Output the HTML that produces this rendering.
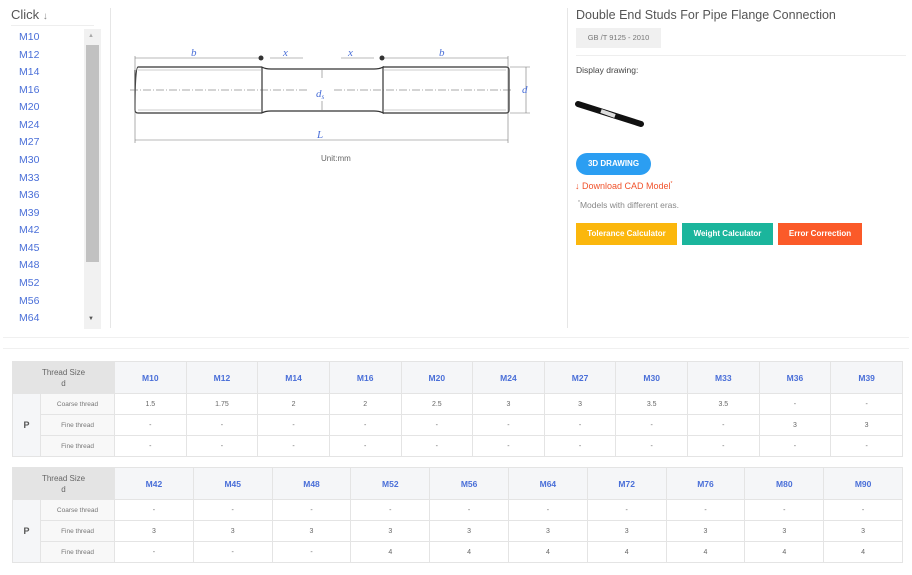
<!DOCTYPE html>
<html><head><meta charset="utf-8"><style>
*{box-sizing:border-box;margin:0;padding:0}
body{width:912px;height:575px;background:#fff;font-family:"Liberation Sans",sans-serif;position:relative;overflow:hidden;color:#333}
.abs{position:absolute}
.li{position:absolute;left:19px;font-size:10.5px;color:#4a6fd8}
table{position:absolute;border-collapse:collapse;left:12px;width:891px;font-size:7px;color:#666;table-layout:fixed}
td{border:1px solid #e4e4e4;text-align:center;height:21px}
.h td{height:32px;background:#f5f6f8;color:#4a6fd8;font-weight:bold;font-size:8.5px}
.h td.ts{background:#e4e4e4;color:#666;font-weight:normal;font-size:8px;line-height:11px}
td.p{background:#f5f6f8;font-weight:bold;font-size:9px;color:#555}
td.lab{background:#f8f8f8;font-size:6.5px;color:#777}
.btn{position:absolute;top:223px;height:22px;color:#fff;font-size:8px;font-weight:bold;text-align:center;line-height:22px}
</style></head><body>
<div class="abs" style="left:110px;top:8px;width:1px;height:320px;background:#e6e6e6"></div>
<div class="abs" style="left:567px;top:8px;width:1px;height:320px;background:#e6e6e6"></div>
<div class="abs" style="left:3px;top:337px;width:906px;height:1px;background:#f0f0f0"></div>
<div class="abs" style="left:3px;top:348px;width:906px;height:1px;background:#f0f0f0"></div>
<div class="abs" style="left:11px;top:7px;font-size:13px;color:#555">Click <span style="font-size:10px;color:#888">↓</span></div>
<div class="abs" style="left:11px;top:25px;width:83px;height:1px;background:#eee"></div>
<div class="abs" style="left:84px;top:29px;width:17px;height:300px;background:#f1f1f1"></div>
<div class="abs" style="left:86px;top:45px;width:13px;height:217px;background:#c1c1c1"></div>
<div class="abs" style="left:88px;top:33px;font-size:6px;color:#aaa">▲</div>
<div class="abs" style="left:88px;top:316px;font-size:6px;color:#555">▼</div>
<div class="li" style="top:31px">M10</div><div class="li" style="top:48.5px">M12</div><div class="li" style="top:66px">M14</div><div class="li" style="top:84px">M16</div><div class="li" style="top:101px">M20</div><div class="li" style="top:119px">M24</div><div class="li" style="top:136px">M27</div><div class="li" style="top:154px">M30</div><div class="li" style="top:172px">M33</div><div class="li" style="top:189px">M36</div><div class="li" style="top:207px">M39</div><div class="li" style="top:224px">M42</div><div class="li" style="top:242px">M45</div><div class="li" style="top:259px">M48</div><div class="li" style="top:277px">M52</div><div class="li" style="top:295px">M56</div><div class="li" style="top:312px">M64</div>
<svg class="abs" style="left:0;top:0" width="567" height="170">
<g stroke="#333" stroke-width="1.2" fill="none">
<path d="M138,67 H262 M138,113 H262 M135,70 V110 Q135,67 138,67 M135,110 Q135,113 138,113"/>
<path d="M262,67 V113 M262,67 Q265,69 271,69 H374 Q380,69 383,67 V113 Q380,111 374,111 H271 Q265,111 262,113"/>
<path d="M383,67 H506 M383,113 H506 M506,67 Q509,67 509,70 V110 Q509,113 506,113"/>
<path d="M138,70 H262 M138,110 H262 M383,70 H506 M383,110 H506" stroke="#999" stroke-width=".5"/>
<path d="M130,90 H309 M334,90 H513" stroke="#555" stroke-width=".6" stroke-dasharray="8,2,1,2"/>
<path d="M135,58 H262 M270,58 H303 M341,58 H374 M383,58 H508 M135,140 H508 M135,56 V143 M508,56 V143 M510,67 H530 M510,113 H530 M526,67 V113 M322,70 V78 M322,101 V110" stroke="#777" stroke-width=".6"/>
</g>
<circle cx="261" cy="58" r="2.5" fill="#333"/><circle cx="382" cy="58" r="2.5" fill="#333"/>
<g font-family="Liberation Serif" font-style="italic" font-size="11" fill="#4a6fd8">
<text x="191" y="56">b</text><text x="283" y="56">x</text><text x="348" y="56">x</text><text x="439" y="56">b</text><text x="316" y="97">d<tspan font-size="7" dy="2">s</tspan></text><text x="522" y="93">d</text><text x="317" y="138">L</text></g>
<text x="321" y="161" font-size="8" fill="#666" font-family="Liberation Sans">Unit:mm</text>
</svg>
<div class="abs" style="left:576px;top:8px;font-size:12.5px;color:#555">Double End Studs For Pipe Flange Connection</div>
<div class="abs" style="left:576px;top:28px;width:85px;height:20px;background:#f0f0f0;font-size:7.5px;color:#777;line-height:20px;text-align:center">GB /T 9125 - 2010</div>
<div class="abs" style="left:576px;top:55px;width:330px;height:1px;background:#eee"></div>
<div class="abs" style="left:576px;top:65px;font-size:8.5px;color:#444">Display drawing:</div>
<svg class="abs" style="left:575px;top:98px" width="70" height="32"><path d="M3,6 L66,26" stroke="#111" stroke-width="6" stroke-linecap="round"/><path d="M26,13 L40,18" stroke="#ddd" stroke-width="4"/></svg>
<div class="abs" style="left:576px;top:153px;width:75px;height:22px;border-radius:11px;background:#2b9ef2;color:#fff;font-size:8px;font-weight:bold;text-align:center;line-height:22px">3D DRAWING</div>
<div class="abs" style="left:575px;top:181px;font-size:9px;color:#f0522b">↓ Download CAD Model<sup style="font-size:5px">*</sup></div>
<div class="abs" style="left:578px;top:200px;font-size:8.5px;color:#888"><sup style="font-size:5px">*</sup>Models with different eras.</div>
<div class="btn" style="left:576px;width:101px;background:#fbb70d">Tolerance Calculator</div>
<div class="btn" style="left:682px;width:91px;background:#1bb59c">Weight Calculator</div>
<div class="btn" style="left:778px;width:84px;background:#fb5a29">Error Correction</div>
<table style="top:361px"><colgroup><col style="width:28px"><col style="width:74px"><col span="11"></colgroup>
<tr class="h"><td class="ts" colspan="2">Thread Size<br>d</td><td>M10</td><td>M12</td><td>M14</td><td>M16</td><td>M20</td><td>M24</td><td>M27</td><td>M30</td><td>M33</td><td>M36</td><td>M39</td></tr>
<tr><td class="p" rowspan="3">P</td><td class="lab">Coarse thread</td><td>1.5</td><td>1.75</td><td>2</td><td>2</td><td>2.5</td><td>3</td><td>3</td><td>3.5</td><td>3.5</td><td>-</td><td>-</td></tr>
<tr><td class="lab">Fine thread</td><td>-</td><td>-</td><td>-</td><td>-</td><td>-</td><td>-</td><td>-</td><td>-</td><td>-</td><td>3</td><td>3</td></tr>
<tr><td class="lab">Fine thread</td><td>-</td><td>-</td><td>-</td><td>-</td><td>-</td><td>-</td><td>-</td><td>-</td><td>-</td><td>-</td><td>-</td></tr>
</table>
<table style="top:467px"><colgroup><col style="width:28px"><col style="width:74px"><col span="10"></colgroup>
<tr class="h"><td class="ts" colspan="2">Thread Size<br>d</td><td>M42</td><td>M45</td><td>M48</td><td>M52</td><td>M56</td><td>M64</td><td>M72</td><td>M76</td><td>M80</td><td>M90</td></tr>
<tr><td class="p" rowspan="3">P</td><td class="lab">Coarse thread</td><td>-</td><td>-</td><td>-</td><td>-</td><td>-</td><td>-</td><td>-</td><td>-</td><td>-</td><td>-</td></tr>
<tr><td class="lab">Fine thread</td><td>3</td><td>3</td><td>3</td><td>3</td><td>3</td><td>3</td><td>3</td><td>3</td><td>3</td><td>3</td></tr>
<tr><td class="lab">Fine thread</td><td>-</td><td>-</td><td>-</td><td>4</td><td>4</td><td>4</td><td>4</td><td>4</td><td>4</td><td>4</td></tr>
</table>
</body></html>
